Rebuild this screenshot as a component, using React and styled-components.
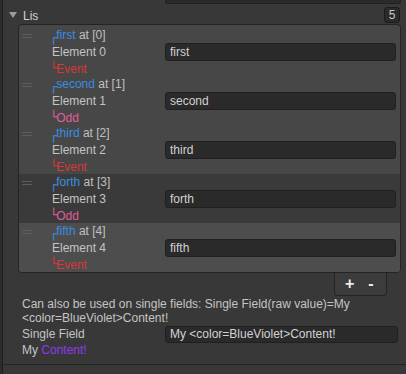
import styled, { createGlobalStyle } from "styled-components";

const GlobalStyle = createGlobalStyle`
	html, body {
		margin: 0;
		padding: 0;
		background: #383838;
	}
	body {
		font-family: "Liberation Sans", Arial, sans-serif;
		font-size: 12px;
		color: #c4c4c4;
	}
`;

const Frame = styled.div`
	width: 406px;
	height: 374px;
	overflow: hidden;
	box-sizing: border-box;
	border-left: 2px solid #2c2c2c;
	background: #383838;
`;

const Panel = styled.div`
	height: 100%;
	border-left: 1px solid #1f1f1f;
	display: flex;
	flex-direction: column;
`;

const TopRow = styled.div`
	display: grid;
	grid-template-columns: 162px 1fr;
	height: 4px;
	padding-right: 5px;
`;

const TopField = styled.div`
	height: 4px;
	box-sizing: border-box;
	background: #2a2a2a;
	border: 1px solid #212121;
	border-top: 0 none;
	border-radius: 0 0 3px 3px;
`;

const Header = styled.div`
	display: flex;
	align-items: center;
	height: 20px;
	padding: 0 6px 0 6px;

	.title {
		flex: 1;
		padding-top: 3px;
		margin-left: 6px;
		color: #d2d2d2;
	}
`;

const Caret = styled.svg`
	width: 8px;
	height: 6px;
	margin-top: 2px;
`;

const Count = styled.div`
	width: 16px;
	height: 16px;
	box-sizing: border-box;
	background: #2a2a2a;
	border: 1px solid #1c1c1c;
	border-radius: 3px;
	color: #c8c8c8;
	font-size: 12px;
	line-height: 15px;
	text-align: center;
	margin-top: 1px;
`;

const ListBox = styled.div`
	margin: 0 5px 0 15px;
	padding-top: 2px;
	background: #474747;
	border: 1px solid #242424;
	border-radius: 4px;
	overflow: hidden;
`;

const tones = {
	normal: "#474747",
	dark: "#3a3a3a",
	light: "#4d4d4d",
};

const Element = styled.div`
	display: flex;
	height: 49px;
	background: ${(p) => tones[p.$tone]};
`;

const Handle = styled.div`
	width: 30px;
	padding-left: 3px;
	height: 16px;
	display: flex;
	align-items: center;

	span {
		width: 10px;
		height: 4px;
		box-sizing: border-box;
		border-top: 1px solid #5d5d5d;
		border-bottom: 1px solid #5d5d5d;
		margin-top: 1px;
	}
`;

const Body = styled.div`
	flex: 1;
	display: flex;
	flex-direction: column;
`;

const Caption = styled.div`
	height: 16px;
	line-height: 16px;
	color: #c0c0c0;
	white-space: nowrap;

	.name {
		color: #3a8de2;
	}
`;

const Corner = styled.span`
	font-family: "DejaVu Sans", sans-serif;
	font-size: 12px;
	font-weight: bold;
	color: ${(p) => p.$color};
	vertical-align: ${(p) => p.$lift}px;
	margin-left: -2px;
	margin-right: -1px;
`;

const FieldRow = styled.div`
	display: grid;
	grid-template-columns: ${(p) => p.$label}px 1fr;
	align-items: center;
	height: ${(p) => p.$height}px;
	padding-right: 4px;
`;

const Label = styled.div`
	color: #c4c4c4;
	white-space: nowrap;
`;

const Field = styled.div`
	height: ${(p) => p.$height}px;
	box-sizing: border-box;
	background: #2a2a2a;
	border: 1px solid #202020;
	border-radius: 3px;
	padding: 0 4px;
	line-height: ${(p) => p.$height - 2}px;
	color: #d2d2d2;
	white-space: nowrap;
	overflow: hidden;
`;

const Footer = styled.div`
	height: 15px;
	line-height: 15px;
	color: ${(p) => p.$color};
`;

const ButtonTab = styled.div`
	align-self: flex-end;
	margin-right: 19px;
	width: 53px;
	height: 23px;
	box-sizing: border-box;
	background: #3c3c3c;
	border: 1px solid #242424;
	border-top: 0 none;
	border-radius: 0 0 4px 4px;
	display: flex;
	align-items: center;
	gap: 14px;
	padding-left: 10px;
	color: #ececec;
	font-weight: bold;
	font-size: 16px;
	line-height: 20px;
`;

const Section = styled.div`
	padding: 1px 4px 0 19px;
	line-height: 14px;
	color: #c4c4c4;
`;

const Preview = styled.div`
	line-height: 14px;

	.violet {
		color: #9138ee;
	}
`;

const Divider = styled.div`
	margin-top: 7px;
	border-top: 1px solid #232323;
`;

const items = [
	{ name: "first", tag: "Event", tone: "normal" },
	{ name: "second", tag: "Odd", tone: "normal" },
	{ name: "third", tag: "Event", tone: "normal" },
	{ name: "forth", tag: "Odd", tone: "dark" },
	{ name: "fifth", tag: "Event", tone: "light" },
];

const tagColors = {
	Event: "#d8383b",
	Odd: "#e35b9c",
};

const App = () => {
	return (
		<>
			<GlobalStyle />
			<Frame>
				<Panel>
					<TopRow>
						<div />
						<TopField />
					</TopRow>
					<Header>
						<Caret viewBox="0 0 8 6">
							<path d="M0 0 H8 L4 6 Z" fill="#9c9c9c" />
						</Caret>
						<span className="title">Lis</span>
						<Count>5</Count>
					</Header>
					<ListBox>
						{items.map((item, i) => (
							<Element key={item.name} $tone={item.tone}>
								<Handle>
									<span />
								</Handle>
								<Body>
									<Caption>
										<Corner $color="#3a8de2" $lift={-3}>
											┌
										</Corner>
										<span className="name">{item.name}</span> at [{i}]
									</Caption>
									<FieldRow $label={113} $height={18}>
										<Label>Element {i}</Label>
										<Field $height={18}>{item.name}</Field>
									</FieldRow>
									<Footer $color={tagColors[item.tag]}>
										<Corner $color={tagColors[item.tag]} $lift={1}>
											└
										</Corner>
										{item.tag}
									</Footer>
								</Body>
							</Element>
						))}
					</ListBox>
					<ButtonTab>
						<span>+</span>
						<span>-</span>
					</ButtonTab>
					<Section>
						<div>
							Can also be used on single fields: Single Field(raw value)=My
							&lt;color=BlueViolet&gt;Content!
						</div>
						<FieldRow $label={143} $height={18}>
							<Label>Single Field</Label>
							<Field $height={17}>My &lt;color=BlueViolet&gt;Content!</Field>
						</FieldRow>
						<Preview>
							My <span className="violet">Content!</span>
						</Preview>
					</Section>
					<Divider />
				</Panel>
			</Frame>
		</>
	);
};

export default App;
